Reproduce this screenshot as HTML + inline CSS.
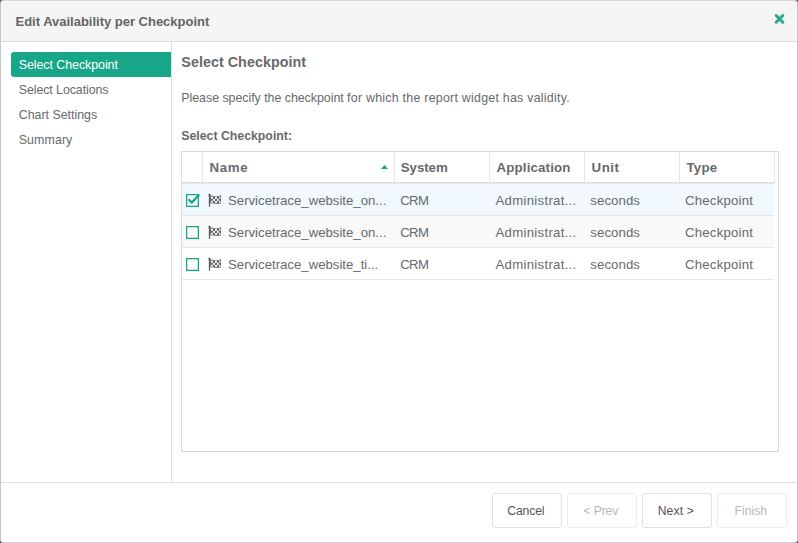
<!DOCTYPE html>
<html><head><meta charset="utf-8">
<title>Edit Availability per Checkpoint</title>
<style>
*{box-sizing:border-box;margin:0;padding:0}
html,body{width:798px;height:543px;overflow:hidden;background:#5f5f5f;font-family:"Liberation Sans",sans-serif;color:#555}
.dlg{position:absolute;left:0;top:0;width:798px;height:543px;background:#fff;border:1px solid #d0d0d0;border-color:#d8d8d8 #c6c6c6 #d2d2d2 #c6c6c6;border-radius:4px;overflow:hidden}
.abs,.dlg div,.dlg span,.dlg i,.dlg svg{position:absolute;white-space:nowrap}
.hdr{left:0;top:0;width:796px;height:41px;z-index:2;background:#f5f5f5;border-bottom:1px solid #dcdcdc}
.hdr .t{left:14.5px;top:13px;line-height:16px;font-size:13px;font-weight:bold;color:#646464;letter-spacing:-.01px}
.x{left:772px;top:11px;width:14px;height:14px}
.side{left:0;top:40px;width:171px;height:441px;border-right:1px solid #ddd}
.side div{left:10px;width:160px;height:25px;line-height:27px;padding-left:7.7px;font-size:12.4px;color:#676a6c}
.side .a{background:#18a689;color:#fff;border-radius:3px 0 0 3px}
.main{left:171px;top:40px;width:625px;height:441px}
.h2{left:9.3px;top:11px;font-size:14.3px;line-height:20px;font-weight:bold;color:#676a6c;letter-spacing:.05px}
.p{left:9.3px;top:48px;font-size:12.4px;line-height:18px;color:#676a6c;letter-spacing:.118px}
.l{left:9.3px;top:86px;font-size:12.3px;line-height:18px;font-weight:bold;color:#676a6c}
.grid{left:9px;top:110px;width:598px;height:301px;border:1px solid #dadada;background:#fff}
.gh{left:0;top:0;width:593px;height:31px;border-bottom:1px solid #ddd;background:#fff}
.gh span{top:0;height:30px;line-height:32px;font-size:13.3px;font-weight:bold;color:#676a6c;border-right:1px solid #e7e7e7;padding-left:6.5px}
.row{left:0;width:592px;height:32px;border-bottom:1px solid #e4e6e8}
.row span{top:0;height:31px;line-height:33px;font-size:13.2px;color:#676a6c}
.cb{left:3px;top:9px;width:16px;height:16px}
.fl{left:25px;top:9px;width:15px;height:15px}
.ftr{left:0;top:481px;width:796px;height:60px;border-top:1px solid #ddd;background:#fff}
.btn{top:10px;width:70px;height:35px;border:1px solid #dfdfdf;border-radius:3px;background:#fff;text-align:center;line-height:35px;font-size:12.2px;color:#555;padding-right:2.4px}
.btn.d{color:#b8b8b8;border-color:#ececec}
</style></head><body>
<div class="dlg">
 <div class="hdr"><div class="t">Edit Availability per Checkpoint</div>
  <svg class="x" viewBox="0 0 14 14"><path d="M3.15 3.55 L9.85 10.25 M9.85 3.55 L3.15 10.25" stroke="#2aa78e" stroke-width="3" stroke-linecap="round" fill="none"/></svg>
 </div>
 <div class="side">
  <div class="a" style="top:11px;letter-spacing:-.04px">Select Checkpoint</div>
  <div style="top:36px;letter-spacing:-.07px">Select Locations</div>
  <div style="top:61px">Chart Settings</div>
  <div style="top:86px;letter-spacing:.1px">Summary</div>
 </div>
 <div class="main">
  <div class="h2">Select Checkpoint</div>
  <div class="p"><span style="position:static;letter-spacing:-.03px">Please specify the checkpoint </span><span style="position:static;letter-spacing:.25px">for which the report widget has validity.</span></div>
  <div class="l">Select Checkpoint:</div>
  <div class="grid">
   <div class="gh">
    <span style="left:0;width:21px"></span>
    <span style="left:21px;width:192px;letter-spacing:.66px">Name</span>
    <span style="left:213px;width:95px;padding-left:5.8px;letter-spacing:-.08px">System</span>
    <span style="left:308px;width:95px;letter-spacing:.15px">Application</span>
    <span style="left:403px;width:95px;letter-spacing:.53px">Unit</span>
    <span style="left:498px;width:95px;letter-spacing:.2px">Type</span>
    <svg style="left:198px;top:12px;width:9px;height:6px" viewBox="0 0 9 6"><path d="M1 5 L4.5 1 L8 5 Z" fill="#18a689"/></svg>
   </div>
   <div class="row" style="top:32px;background:#f1f9fe;border-top:1px solid #e4e8ec;top:31px;height:33px"><svg class="cb" viewBox="0 0 16 16"><rect x="1.65" y="1.65" width="11.7" height="11.7" fill="#fff" stroke="#18a689" stroke-width="1.3"/><path d="M3.5 6.2 L6.8 9.6 L14.3 1.5" fill="none" stroke="#18a689" stroke-width="2.3"/></svg><svg class="fl" viewBox="0 0 15 15"><circle cx="2.5" cy="1.9" r="1.15" fill="#5c5c5c"/><rect x="1.85" y="1.5" width="1.25" height="12.2" fill="#5c5c5c"/><path d="M3 2.6 C5 2 6.5 3.5 9 3.4 C11 3.3 12.5 2.5 14 2.2 L14 10.3 C12.5 10.9 11 11.2 9 11 C7 10.8 5 9.8 3 10.3 Z" fill="#666"/><g fill="#f0f5f8"><rect x="3.9" y="3.7" width="2.1" height="2.1"/><rect x="8" y="4.1" width="2.1" height="1.9"/><rect x="11.9" y="3.6" width="1.5" height="2.1"/><rect x="6" y="6" width="2" height="1.9"/><rect x="10" y="6" width="1.9" height="1.9"/><rect x="3.9" y="7.8" width="2.1" height="1.8"/><rect x="8" y="8" width="2.1" height="2.1"/><rect x="11.9" y="7.8" width="1.5" height="2"/></g></svg><span style="left:46px">Servicetrace_website_on...</span><span style="left:218.3px;letter-spacing:-.71px">CRM</span><span style="left:313.5px;letter-spacing:.29px">Administrat...</span><span style="left:408.3px;letter-spacing:.08px">seconds</span><span style="left:503px;letter-spacing:.22px">Checkpoint</span></div>
   <div class="row" style="top:64px;background:#f9f9f9"><svg class="cb" viewBox="0 0 16 16"><rect x="1.65" y="1.65" width="11.7" height="11.7" fill="#fff" stroke="#18a689" stroke-width="1.3"/></svg><svg class="fl" viewBox="0 0 15 15"><circle cx="2.5" cy="1.9" r="1.15" fill="#5c5c5c"/><rect x="1.85" y="1.5" width="1.25" height="12.2" fill="#5c5c5c"/><path d="M3 2.6 C5 2 6.5 3.5 9 3.4 C11 3.3 12.5 2.5 14 2.2 L14 10.3 C12.5 10.9 11 11.2 9 11 C7 10.8 5 9.8 3 10.3 Z" fill="#666"/><g fill="#f0f5f8"><rect x="3.9" y="3.7" width="2.1" height="2.1"/><rect x="8" y="4.1" width="2.1" height="1.9"/><rect x="11.9" y="3.6" width="1.5" height="2.1"/><rect x="6" y="6" width="2" height="1.9"/><rect x="10" y="6" width="1.9" height="1.9"/><rect x="3.9" y="7.8" width="2.1" height="1.8"/><rect x="8" y="8" width="2.1" height="2.1"/><rect x="11.9" y="7.8" width="1.5" height="2"/></g></svg><span style="left:46px">Servicetrace_website_on...</span><span style="left:218.3px;letter-spacing:-.71px">CRM</span><span style="left:313.5px;letter-spacing:.29px">Administrat...</span><span style="left:408.3px;letter-spacing:.08px">seconds</span><span style="left:503px;letter-spacing:.22px">Checkpoint</span></div>
   <div class="row" style="top:96px"><svg class="cb" viewBox="0 0 16 16"><rect x="1.65" y="1.65" width="11.7" height="11.7" fill="#fff" stroke="#18a689" stroke-width="1.3"/></svg><svg class="fl" viewBox="0 0 15 15"><circle cx="2.5" cy="1.9" r="1.15" fill="#5c5c5c"/><rect x="1.85" y="1.5" width="1.25" height="12.2" fill="#5c5c5c"/><path d="M3 2.6 C5 2 6.5 3.5 9 3.4 C11 3.3 12.5 2.5 14 2.2 L14 10.3 C12.5 10.9 11 11.2 9 11 C7 10.8 5 9.8 3 10.3 Z" fill="#666"/><g fill="#f0f5f8"><rect x="3.9" y="3.7" width="2.1" height="2.1"/><rect x="8" y="4.1" width="2.1" height="1.9"/><rect x="11.9" y="3.6" width="1.5" height="2.1"/><rect x="6" y="6" width="2" height="1.9"/><rect x="10" y="6" width="1.9" height="1.9"/><rect x="3.9" y="7.8" width="2.1" height="1.8"/><rect x="8" y="8" width="2.1" height="2.1"/><rect x="11.9" y="7.8" width="1.5" height="2"/></g></svg><span style="left:46px">Servicetrace_website_ti...</span><span style="left:218.3px;letter-spacing:-.71px">CRM</span><span style="left:313.5px;letter-spacing:.29px">Administrat...</span><span style="left:408.3px;letter-spacing:.08px">seconds</span><span style="left:503px;letter-spacing:.22px">Checkpoint</span></div>
  </div>
 </div>
 <div class="ftr">
  <div class="btn" style="left:491px;letter-spacing:-.14px">Cancel</div>
  <div class="btn d" style="left:566px;letter-spacing:-.12px">&lt; Prev</div>
  <div class="btn" style="left:641px;letter-spacing:.12px">Next &gt;</div>
  <div class="btn d" style="left:716px">Finish</div>
 </div>
</div>
</body></html>
